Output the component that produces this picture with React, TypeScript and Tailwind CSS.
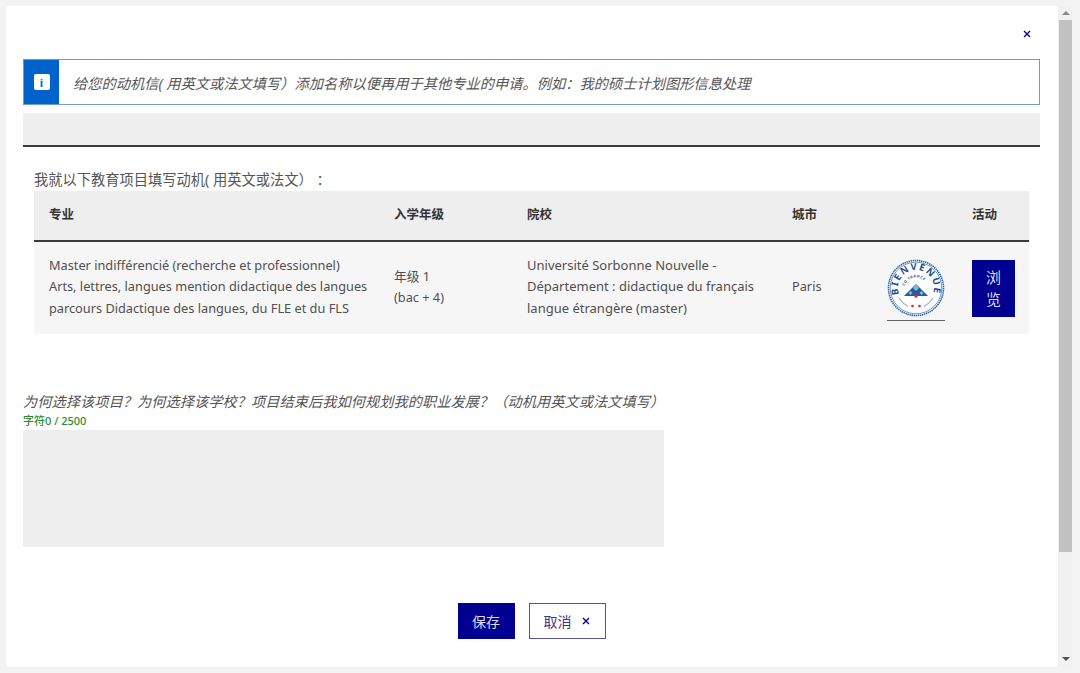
const font = "font-['Noto_Sans','Noto_Sans_CJK_SC',sans-serif]";

const Seal = () => (
  <svg width="58" height="58" viewBox="0 0 58 58">
    <defs>
      <path id="sealArc" d="M 12.1 35.2 A 18 18 0 1 1 45.9 35.2" fill="none" />
      <path id="sealArcSmall" d="M 17.5 27 A 12 12 0 0 1 40.5 27" fill="none" />
    </defs>
    <circle cx="29" cy="29" r="27.5" fill="#fff" stroke="#2f6aa8" strokeWidth="1.6" strokeDasharray="1.5 0.6" />
    <circle cx="29" cy="29" r="25.8" fill="none" stroke="#2f6aa8" strokeWidth="0.7" />
    <text fill="#1f4f8f" fontSize="9.5" fontWeight="700" letterSpacing="1.5" fontFamily="Noto Sans">
      <textPath href="#sealArc">BIENVENUE</textPath>
    </text>
    <text fill="#1f4f8f" fontSize="3.6" fontWeight="700" letterSpacing="0.5" fontFamily="Noto Sans">
      <textPath href="#sealArcSmall">CO FRANCE</textPath>
    </text>
    <polygon points="29,25 41,37 17,37" fill="#1f5c9e" />
    <polygon points="29,25 32,29 29,32 26,29" fill="#8fb4d8" />
    <polygon points="23.5,32 25.5,34 23.5,36 21.5,34" fill="#8fb4d8" />
    <polygon points="34.5,32 36.5,34 34.5,36 32.5,34" fill="#8fb4d8" />
    <circle cx="29" cy="37" r="1.8" fill="#d8283c" />
    <path d="M 12 39 Q 15 44 21 47.5" fill="none" stroke="#1f4f8f" strokeWidth="0.6" />
    <path d="M 46 39 Q 43 44 37 47.5" fill="none" stroke="#1f4f8f" strokeWidth="0.6" />
    <circle cx="25.5" cy="47" r="1.3" fill="#d8283c" />
    <circle cx="32.5" cy="47" r="1.3" fill="#d8283c" />
  </svg>
);

const CloseIcon = ({ size = 10 }: { size?: number }) => (
  <svg width={size} height={size} viewBox="0 0 10 10">
    <path d="M2 2 L8 8 M8 2 L2 8" stroke="#000091" strokeWidth="1.4" fill="none" />
  </svg>
);

const App = () => {
  return (
    <div className={`flex h-[673px] w-[1080px] overflow-hidden bg-[#f3f3f3] pt-[6px] pb-[6px] pl-[6px] ${font}`}>
      <div className="flex h-[661px] w-[1052px] flex-col rounded-[4px] bg-white pl-[17px] pr-[18px] text-[#3a3a3a]">
        <div className="flex h-[53px] items-start justify-end pr-[8px] pt-[23px]">
          <CloseIcon />
        </div>

        <div className="flex h-[46px] border border-[#6f9fb8]">
          <div className="flex w-[35px] shrink-0 items-center justify-center bg-[#0063cb]">
            <div className="flex h-[16px] w-[16px] items-center justify-center rounded-[2px] bg-white text-[11px] font-bold leading-none text-[#0063cb]">i</div>
          </div>
          <div className="flex items-center pl-[14px] pt-[4px] text-[14.25px] italic text-[#555]">
            给您的动机信( 用英文或法文填写）添加名称以便再用于其他专业的申请。例如：我的硕士计划图形信息处理
          </div>
        </div>

        <div className="mt-[8px] h-[34px] border-b-2 border-[#3a3a3a] bg-[#eeeeee]" />

        <div className="mx-[11px] mt-[23px] text-[14.25px] leading-[20px] text-[#555]">我就以下教育项目填写动机( 用英文或法文） ：</div>

        <div className="mx-[11px] mt-[1px]">
          <div className="flex h-[51px] items-center border-b-2 border-[#3a3a3a] bg-[#eeeeee] pb-[1px] text-[12.5px] font-bold text-[#333]">
            <div className="w-[360px] pl-[15px]">专业</div>
            <div className="w-[133px]">入学年级</div>
            <div className="w-[265px]">院校</div>
            <div className="w-[180px]">城市</div>
            <div>活动</div>
          </div>
          <div className="flex h-[92px] items-center bg-[#f6f6f6] pb-[2px] text-[12.75px] leading-[21.5px] text-[#505050]">
            <div className="w-[360px] whitespace-nowrap pl-[15px]">
              <div>Master indifférencié (recherche et professionnel)</div>
              <div>Arts, lettres, langues mention didactique des langues</div>
              <div>parcours Didactique des langues, du FLE et du FLS</div>
            </div>
            <div className="w-[133px]">
              <div>年级 1</div>
              <div>(bac + 4)</div>
            </div>
            <div className="w-[265px] whitespace-nowrap text-[13px]">
              <div>Université Sorbonne Nouvelle -</div>
              <div>Département : didactique du français</div>
              <div>langue étrangère (master)</div>
            </div>
            <div className="w-[95px]">Paris</div>
            <div className="mt-[2px] w-[85px]">
              <div className="w-[58px] border-b border-[#666] pb-[3px] pt-[3px]">
                <Seal />
              </div>
            </div>
            <button className="mt-[2px] flex h-[57px] w-[43px] items-center justify-center bg-[#000091] text-center text-[15px] leading-[22px] text-[#dcdcf4]">
              浏<br />览
            </button>
          </div>
        </div>

        <div className="mt-[58px] text-[14.25px] italic leading-[20px] text-[#555]">
          为何选择该项目？为何选择该学校？项目结束后我如何规划我的职业发展？（动机用英文或法文填写）
        </div>
        <div className="mt-[2px] text-[11px] font-medium leading-[14px] text-[#2f8a2f]">字符0 / 2500</div>
        <div className="mt-[2px] h-[117px] w-[641px] bg-[#eeeeee]" />

        <div className="mt-[56px] flex justify-center gap-[14px]">
          <button className="h-[36px] w-[57px] bg-[#000091] text-[14px] text-[#dcdcf4]">保存</button>
          <button className="flex h-[36px] w-[77px] items-center justify-center gap-[9px] border border-[#55558f] bg-white text-[14px] text-[#3a3a80]">
            取消 <CloseIcon />
          </button>
        </div>
      </div>

      <div className="flex h-[661px] w-[14px] flex-col items-center bg-[#f1f1f1] pl-[1px]">
        <div className="flex h-[14px] items-center justify-center">
          <div className="h-0 w-0 border-x-[4px] border-b-[4px] border-x-transparent border-b-[#8a8a8a]" />
        </div>
        <div className="h-[532px] w-full bg-[#c1c1c1]" />
        <div className="flex flex-1 items-end justify-center pb-[6px]">
          <div className="h-0 w-0 border-x-[4px] border-t-[4px] border-x-transparent border-t-[#505050]" />
        </div>
      </div>
    </div>
  );
};

export default App;
